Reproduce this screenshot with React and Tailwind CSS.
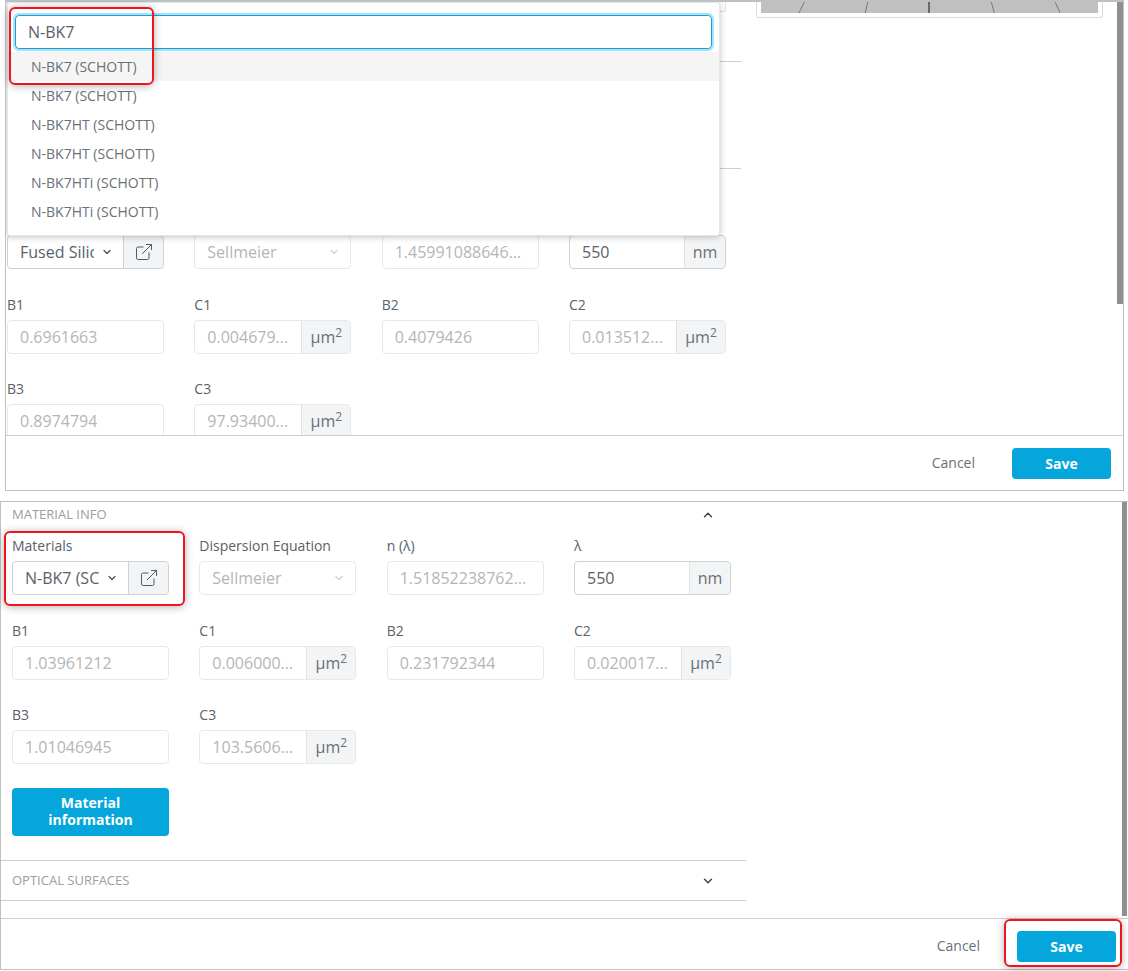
import React from "react";
import { ChevronDown, ChevronUp, ExternalLink } from "lucide-react";

const box = "h-[34px] rounded-[4px] border flex items-center text-[16px]";

function Label({ children }) {
  return <div className="h-[24px] text-[14px] leading-[18px] text-[#5b6166]">{children}</div>;
}

function Input({ value, on }) {
  return (
    <div className={`${box} px-[12px] w-full ${on ? "border-[#ccd3d4] text-[#5b6166]" : "border-[#e6e9ea] text-[#b3b6b8]"}`}>
      <span className="overflow-hidden whitespace-nowrap">{value}</span>
    </div>
  );
}

function Unit({ value, unit, on }) {
  const sup = unit === "um2";
  return (
    <div className={`${box} w-full ${on ? "border-[#ccd3d4]" : "border-[#e6e9ea]"}`}>
      <div className={`min-w-0 flex-1 px-[12px] whitespace-nowrap overflow-hidden ${on ? "text-[#5b6166]" : "text-[#b3b6b8]"}`}>{value}</div>
      <div className={`h-full flex items-center justify-center bg-[#f3f4f5] border-l border-[#dfe3e4] rounded-r-[4px] text-[#6b7076] ${sup ? "w-[49px]" : "w-[41px]"}`}>
        {sup ? <span>μm<sup className="text-[12px] -top-[6px] relative align-baseline">2</sup></span> : unit}
      </div>
    </div>
  );
}

function MaterialSelect({ value }) {
  return (
    <div className={`${box} w-full border-[#ccd3d4]`}>
      <div className="w-[115px] h-full flex items-center pl-[12px] pr-[10px] text-[#5b6166]">
        <span className="flex-1 min-w-0 overflow-hidden whitespace-nowrap">{value}</span>
        <ChevronDown size={12} strokeWidth={2.5} className="ml-[7px] shrink-0 text-[#4a4f54]" />
      </div>
      <div className="flex-1 h-full flex items-center justify-center bg-[#f3f4f5] border-l border-[#ccd3d4] rounded-r-[4px]">
        <ExternalLink size={20} strokeWidth={1.2} className="text-[#55595e]" />
      </div>
    </div>
  );
}

function DisabledSelect() {
  return (
    <div className={`${box} w-full border-[#e6e9ea] pl-[12px] pr-[10px] text-[#b3b6b8]`}>
      <span className="flex-1">Sellmeier</span>
      <ChevronDown size={12} strokeWidth={2} className="text-[#a4a8ab]" />
    </div>
  );
}

function Form({ labels, mat, n, b1, c1, b2, c2, b3, c3 }) {
  return (
    <div className="grid grid-cols-[repeat(4,157px)] gap-x-[30.33px] gap-y-[26.5px]">
      <div>
        {labels && <Label>Materials</Label>}
        <MaterialSelect value={mat} />
      </div>
      <div>
        {labels && <Label>Dispersion Equation</Label>}
        <DisabledSelect />
      </div>
      <div>
        {labels && <Label>n (λ)</Label>}
        <Input value={n} />
      </div>
      <div>
        {labels && <Label>λ</Label>}
        <Unit value="550" unit="nm" on />
      </div>
      <div><Label>B1</Label><Input value={b1} /></div>
      <div><Label>C1</Label><Unit value={c1} unit="um2" /></div>
      <div><Label>B2</Label><Input value={b2} /></div>
      <div><Label>C2</Label><Unit value={c2} unit="um2" /></div>
      <div><Label>B3</Label><Input value={b3} /></div>
      <div><Label>C3</Label><Unit value={c3} unit="um2" /></div>
    </div>
  );
}

function Footer({ className }) {
  return (
    <div className={`flex items-start justify-end border-t border-[#c8d0d0] pr-[12px] pt-[12px] ${className}`}>
      <button className="h-[31px] pb-[2px] text-[14px] text-[#6b7076] mr-[37px]">Cancel</button>
      <button className="w-[99px] h-[31px] pb-[1px] rounded-[4px] bg-[#04a6dc] text-white text-[14px] font-bold">Save</button>
    </div>
  );
}

function Thumbnail() {
  return (
    <div className="w-[347px] h-[16px] border-[1.5px] border-t-0 border-[#d5dcdc] rounded-b-[3px] px-[4px] pb-[4px]">
      <svg viewBox="0 0 338 11" className="w-full h-[11px] block bg-[#c0c0c0]">
        <path d="M43.5 0 L38 11" stroke="#777" strokeWidth="1" fill="none" />
        <path d="M107 0 L104.5 11" stroke="#777" strokeWidth="1" fill="none" />
        <path d="M168.5 0 V11" stroke="#555" strokeWidth="1.6" fill="none" />
        <path d="M231 0 L234 11" stroke="#777" strokeWidth="1" fill="none" />
        <path d="M295 0 L300 11" stroke="#777" strokeWidth="1" fill="none" />
      </svg>
    </div>
  );
}

const options = ["N-BK7 (SCHOTT)", "N-BK7 (SCHOTT)", "N-BK7HT (SCHOTT)", "N-BK7HT (SCHOTT)", "N-BK7HTi (SCHOTT)", "N-BK7HTi (SCHOTT)"];

function Dropdown() {
  return (
    <div className="absolute left-[1px] top-0 w-[713px] h-[234px] bg-white rounded-[3px] border border-[#e3e7e7] shadow-[0_1px_6px_rgba(0,0,0,0.25)] flex flex-col">
      <div className="px-[7px] pt-[12px] pb-[3px]">
        <div className="h-[34px] rounded-[4px] border border-[#0da5dc] shadow-[0_0_0_2px_#aee0f3] flex items-center px-[12px] text-[16px] text-[#5b6166]">N-BK7</div>
      </div>
      {options.map((o, i) => (
        <div key={i} className={`h-[29px] shrink-0 flex items-center pl-[23px] text-[14px] text-[#6b7076] ${i === 0 ? "bg-[#f5f5f5]" : ""}`}>{o}</div>
      ))}
    </div>
  );
}

const redBox = "absolute rounded-[6px] border-2 border-[#f0141e] shadow-[0_1px_8px_rgba(0,0,0,0.3)] pointer-events-none";

export default function App() {
  return (
    <div className="relative w-[1128px] h-[971px] bg-white overflow-hidden font-['Open_Sans',sans-serif]">
      <section className="relative ml-[5px] w-[1119px] h-[491px] border border-t-2 border-[#bcc1c1] flex flex-col">
        <div className="relative flex-1 min-h-0 overflow-hidden flex">
          <div className="w-[735px] shrink-0 pl-[1px]">
            <div className="h-[10px] w-[719px] border border-t-0 border-[#e0e4e4] rounded-b-[3px]" />
            <div className="mt-[49px] h-px bg-[#c8d0d0]" />
            <div className="mt-[106px] h-px bg-[#c8d0d0]" />
            <div className="mt-[66px]">
              <Form labels={false} mat="Fused Silic" n="1.45991088646..." b1="0.6961663" c1="0.004679..." b2="0.4079426" c2="0.013512..." b3="0.8974794" c3="97.93400..." />
            </div>
          </div>
          <div className="ml-[15px]"><Thumbnail /></div>
          <div className="ml-auto w-[6px] h-[302px] bg-[#8f8f8f]" />
          <Dropdown />
        </div>
        <Footer className="h-[55px]" />
      </section>

      <section className="relative mt-[10px] w-[1128px] h-[469px] border border-r-0 border-[#bcc1c1] flex flex-col">
        <div className="flex-1 min-h-0 flex overflow-hidden">
          <div className="w-[745px] shrink-0">
            <div className="h-[25px] flex items-center justify-between pl-[11px] pr-[31px] text-[13px] text-[#98a0a3]">
              <span>MATERIAL INFO</span>
              <ChevronUp size={14} strokeWidth={2.5} className="text-[#3f4448]" />
            </div>
            <div className="pl-[11px] pt-[10px]">
              <Form labels mat="N-BK7 (SC" n="1.51852238762..." b1="1.03961212" c1="0.006000..." b2="0.231792344" c2="0.020017..." b3="1.01046945" c3="103.5606..." />
              <button className="mt-[24px] w-[157px] h-[48px] pb-[2px] rounded-[4px] bg-[#04a6dc] text-white text-[14px] leading-[17px] font-bold">Material<br />information</button>
            </div>
            <div className="mt-[24px] h-[41px] border-y border-[#c8d0d0] flex items-center justify-between pl-[11px] pr-[31px] text-[13px] text-[#98a0a3]">
              <span>OPTICAL SURFACES</span>
              <ChevronDown size={14} strokeWidth={2.5} className="text-[#3f4448]" />
            </div>
          </div>
          <div className="ml-auto w-[5px] mr-[1px] h-[414px] bg-[#8f8f8f]" />
        </div>
        <Footer className="h-[51px]" />
      </section>

      <div className={`${redBox} left-[9px] top-[7px] w-[145px] h-[78px]`} />
      <div className={`${redBox} left-[4px] top-[531px] w-[181px] h-[75px]`} />
      <div className={`${redBox} left-[1004px] top-[919px] w-[118px] h-[48px]`} />
    </div>
  );
}
